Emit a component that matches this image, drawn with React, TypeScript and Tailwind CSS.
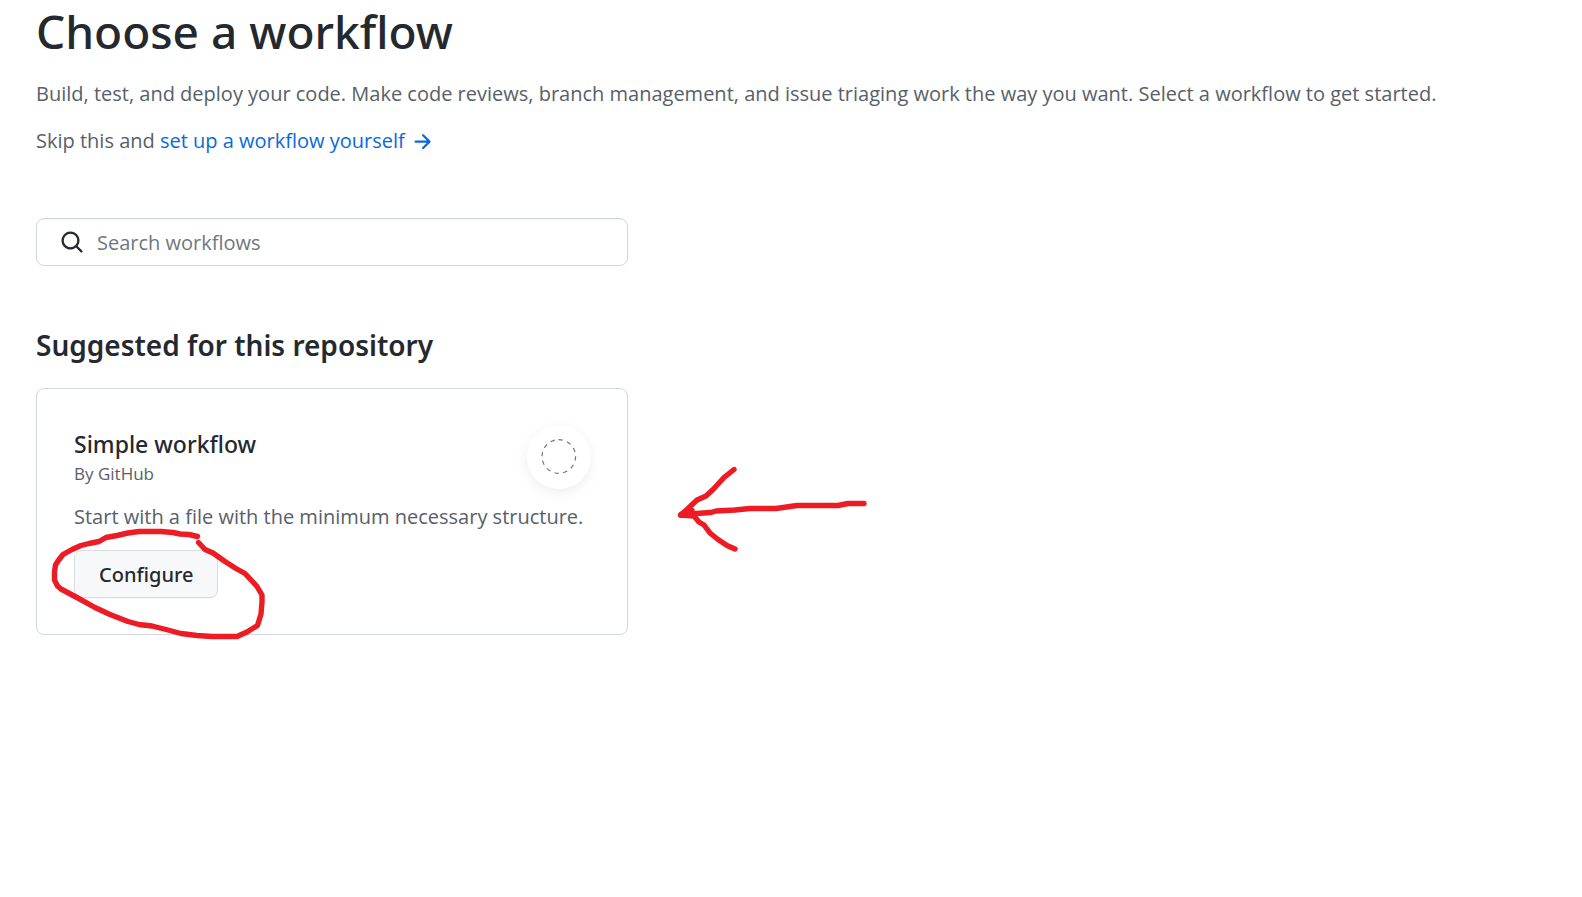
import React from 'react';

function ArrowRightIcon() {
  return (
    <svg className="inline-block h-6 w-6 align-text-bottom" viewBox="0 0 16 16" fill="currentColor" aria-hidden="true">
      <path
        fillRule="evenodd"
        d="M8.22 2.97a.75.75 0 0 1 1.06 0l4.25 4.25a.75.75 0 0 1 0 1.06l-4.25 4.25a.75.75 0 0 1-1.06-1.06l2.97-2.97H3.75a.75.75 0 0 1 0-1.5h7.44L8.22 4.03a.75.75 0 0 1 0-1.06Z"
      />
    </svg>
  );
}

function SearchIcon() {
  return (
    <svg className="h-6 w-6 shrink-0 text-[#24292f]" viewBox="0 0 16 16" fill="currentColor" aria-hidden="true">
      <path
        fillRule="evenodd"
        d="M11.5 7a4.499 4.499 0 1 1-8.998 0A4.499 4.499 0 0 1 11.5 7Zm-.82 4.74a6 6 0 1 1 1.06-1.06l3.04 3.04a.75.75 0 1 1-1.06 1.06l-3.04-3.04Z"
      />
    </svg>
  );
}

function PlaceholderLogo() {
  return (
    <div className="flex h-16 w-16 shrink-0 items-center justify-center rounded-full bg-white shadow-[0_4px_12px_rgba(140,149,159,0.15)]">
      <svg className="h-9 w-9" viewBox="0 0 36 36" fill="none" aria-hidden="true">
        <circle cx="18.5" cy="17.8" r="16.8" stroke="#6e7781" strokeWidth="1.2" strokeDasharray="4.3 4.496" transform="rotate(-91 18 18)" />
      </svg>
    </div>
  );
}

function Annotations() {
  return (
    <svg
      className="pointer-events-none absolute left-0 top-0 h-[660px] w-[880px] max-w-none"
      viewBox="0 0 880 660"
      fill="none"
      stroke="#ed1c24"
      strokeWidth="5.4"
      strokeLinecap="round"
      strokeLinejoin="round"
      aria-hidden="true"
    >
      <path d="M197.500 536.500L189 534.500L180 534L173 532.500L161 531.500L139 531.500L128 533L117 535.500L106 537.500L99 541.500L89 543.500L81 545.500L72 549.500L63 554.500L58 561L55.500 565L54.500 572L54.500 580L57.500 586L61 589L76 597L95 607.500L110 614.500L128 621.500L139 624.500L152 626L166 629.500L181 633.500L197 635.500L212 636.500L237 636.500L247 632L257.500 625.500L261 614L262 602L262 595L257 586.500L252 581L245 573.500L236 568.500L225 561.500L213 553L205 549.500L198.500 542.500" />
      <path d="M864 503.500L848 503.500L838 505.500L797 505.500L776 508.500L750 508.500L735 510L716 511L711 512.500L696 513.500L680.500 515L687 509.500L697 500L706 496L713 489.500L719 483L724 477.500L734 469.500" />
      <path d="M680.500 515L694 516L699 522L704 525L710 533L718 539.500L727 545.500L735 549" />
      <path d="M681 514.500L692 510.500" />
    </svg>
  );
}

export default function App() {
  return (
    <main className="relative bg-white px-9 pb-12 font-['Open_Sans','Noto_Sans',sans-serif] text-xl leading-8 text-[#57606a]">
      <h1 className="font-['Noto_Sans',sans-serif] text-[46px] font-medium leading-[62px] text-[#24292f]">
        Choose a workflow
      </h1>
      <p className="mt-4">
        Build, test, and deploy your code. Make code reviews, branch management, and issue triaging work the way you
        want. Select a workflow to get started.
      </p>
      <p className="mt-[15px]">
        Skip this and{' '}
        <a href="#new" className="text-[#0969da]">
          set up a workflow yourself <ArrowRightIcon />
        </a>
      </p>

      <label className="mt-[61px] flex h-12 w-full max-w-[592px] items-center gap-[13px] rounded-lg border border-[#d0d7de] bg-white pl-[23px] pr-4 shadow-[inset_0_1px_0_rgba(208,215,222,0.2)]">
        <SearchIcon />
        <input
          type="text"
          aria-label="Search workflows"
          placeholder="Search workflows"
          className="min-w-0 flex-1 bg-transparent pt-0.5 text-[#24292f] outline-none placeholder:text-[#6e7781]"
        />
      </label>

      <h2 className="mt-[59px] font-['Noto_Sans',sans-serif] text-[28px] font-semibold leading-10 text-[#24292f]">
        Suggested for this repository
      </h2>

      <article className="mt-[23px] w-full max-w-[592px] rounded-lg border border-[#d0d7de] py-9 pl-[37px] pr-9">
        <div className="flex items-start justify-between">
          <div className="pt-[3px]">
            <h3 className="font-['Noto_Sans',sans-serif] text-[23px] font-medium leading-8 text-[#24292f]">
              Simple workflow
            </h3>
            <p className="text-[17px] leading-7">By GitHub</p>
          </div>
          <PlaceholderLogo />
        </div>
        <p className="mt-3">Start with a file with the minimum necessary structure.</p>
        <button
          type="button"
          className="mt-[17px] flex h-12 items-center rounded-lg border border-[#d8dce0] bg-[#f6f8fa] px-6 pt-0.5 font-['Noto_Sans',sans-serif] font-medium text-[#24292f] shadow-[0_1px_0_rgba(27,31,36,0.04)]"
        >
          Configure
        </button>
      </article>
      <Annotations />
    </main>
  );
}
